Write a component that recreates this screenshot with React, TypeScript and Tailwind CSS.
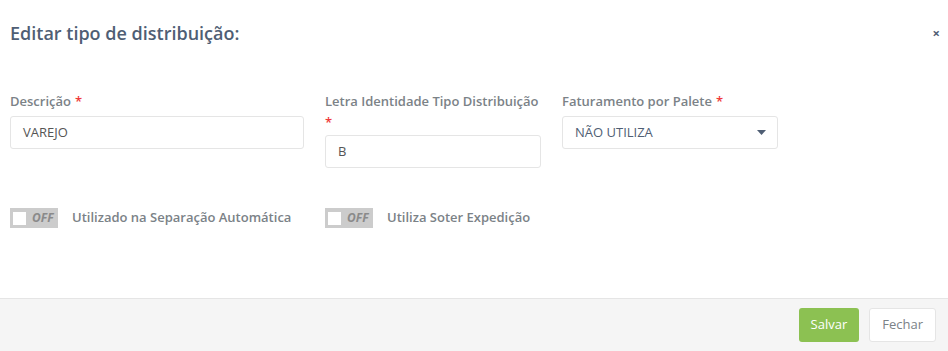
import React from "react";

function Toggle({ label }: { label: string }) {
  return (
    <div className="flex items-center">
      <div className="flex h-[20px] w-[48px] items-center bg-[#cccccc] pl-[3px]">
        <span className="h-[13px] w-[13px] bg-white" />
        <span className="ml-[6px] text-[12px] font-bold italic leading-none text-[#8a8a8a]">OFF</span>
      </div>
      <span className="ml-[14px] text-[13px] font-semibold text-[#7b8287]">{label}</span>
    </div>
  );
}

function Required() {
  return <span className="ml-[4px] text-[#ef3a3a]">*</span>;
}

export default function App() {
  return (
    <div className="flex h-[351px] w-[948px] flex-col bg-white font-['Open_Sans',sans-serif]">
      <div className="flex items-start justify-between pl-[10px] pr-[8px] pt-[21px]">
        <h3 className="text-[18px] font-semibold leading-[24px] text-[#4f5e74]">Editar tipo de distribuição:</h3>
        <span className="text-[13px] font-bold leading-[24px] text-[#4f5e74]">×</span>
      </div>

      <div className="flex pl-[10px] pt-[47px]">
        <div className="w-[294px]">
          <label className="block text-[13px] font-semibold leading-[18px] text-[#7b8287]">
            Descrição<Required />
          </label>
          <div className="mt-[6px] flex h-[33px] items-center rounded-[3px] border border-[#e5e5e5] px-[12px] text-[13px] text-[#555]">
            VAREJO
          </div>
        </div>
        <div className="ml-[21px] w-[216px]">
          <label className="block text-[13px] font-semibold leading-[18px] text-[#7b8287]">
            Letra Identidade Tipo Distribuição
            <br />
            <span className="ml-[-4px] inline-block pt-[3px]">
              <Required />
            </span>
          </label>
          <div className="mt-[4px] flex h-[33px] items-center rounded-[3px] border border-[#e5e5e5] px-[12px] text-[13px] text-[#555]">
            B
          </div>
        </div>
        <div className="ml-[21px] w-[216px]">
          <label className="block text-[13px] font-semibold leading-[18px] text-[#7b8287]">
            Faturamento por Palete<Required />
          </label>
          <div className="mt-[6px] flex h-[33px] items-center justify-between rounded-[3px] border border-[#e5e5e5] pl-[12px] pr-[11px] text-[13px] text-[#4f5e74]">
            <span>NÃO UTILIZA</span>
            <svg width="9" height="5" viewBox="0 0 9 5">
              <path d="M0 0h9L4.5 5z" fill="#4f5e74" />
            </svg>
          </div>
        </div>
      </div>

      <div className="flex pl-[10px] pt-[40px]">
        <div className="w-[315px]">
          <Toggle label="Utilizado na Separação Automática" />
        </div>
        <Toggle label="Utiliza Soter Expedição" />
      </div>

      <div className="mt-auto flex h-[53px] items-center justify-end gap-[10px] border-t border-[#e5e5e5] bg-[#f5f5f5] pr-[12px]">
        <button className="h-[34px] rounded-[3px] bg-[#8cc152] px-[12px] text-[13px] text-white">Salvar</button>
        <button className="h-[34px] rounded-[3px] border border-[#e5e5e5] bg-white px-[12px] text-[13px] text-[#7b8287]">
          Fechar
        </button>
      </div>
    </div>
  );
}
